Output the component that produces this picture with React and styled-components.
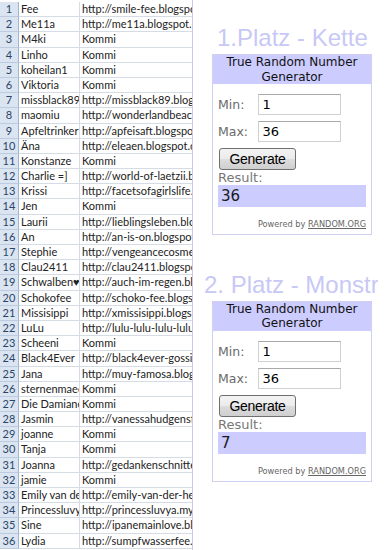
import React from "react";
import styled, { createGlobalStyle } from "styled-components";

const GlobalStyle = createGlobalStyle`
	html, body {
		margin: 0;
		padding: 0;
		background: #fff;
	}
	body {
		width: 388px;
		height: 550px;
		overflow: hidden;
	}
`;

const rows = [
	["Fee", "http://smile-fee.blogspot.com"],
	["Me11a", "http://me11a.blogspot.com"],
	["M4ki", "Kommi"],
	["Linho", "Kommi"],
	["koheilan1", "Kommi"],
	["Viktoria", "Kommi"],
	["missblack89", "http://missblack89.blogspot.com"],
	["maomiu", "http://wonderlandbeach.blogspot.com"],
	["Apfeltrinker", "http://apfeisaft.blogspot.com"],
	["Äna", "http://eleaen.blogspot.com"],
	["Konstanze", "Kommi"],
	["Charlie =]", "http://world-of-laetzii.blogspot.com"],
	["Krissi", "http://facetsofagirlslife.blogspot.com"],
	["Jen", "Kommi"],
	["Laurii", "http://lieblingsleben.blogspot.com"],
	["An", "http://an-is-on.blogspot.com"],
	["Stephie", "http://vengeancecosmetics.blogspot.com"],
	["Clau2411", "http://clau2411.blogspot.com"],
	["Schwalben♥", "http://auch-im-regen.blogspot.com"],
	["Schokofee", "http://schoko-fee.blogspot.com"],
	["Missisippi", "http://xmissisippi.blogspot.com"],
	["LuLu", "http://lulu-lulu-lulu-lulu.blogspot.com"],
	["Scheeni", "Kommi"],
	["Black4Ever", "http://black4ever-gossip.blogspot.com"],
	["Jana", "http://muy-famosa.blogspot.com"],
	["sternenmaedchen", "Kommi"],
	["Die Damianes", "Kommi"],
	["Jasmin", "http://vanessahudgensfan.blogspot.com"],
	["joanne", "Kommi"],
	["Tanja", "Kommi"],
	["Joanna", "http://gedankenschnitte.blogspot.com"],
	["jamie", "Kommi"],
	["Emily van der Heide", "http://emily-van-der-heide.blogspot.com"],
	["Princessluvya", "http://princessluvya.myblog.de"],
	["Sine", "http://ipanemainlove.blogspot.com"],
	["Lydia", "http://sumpfwasserfee.blogspot.com"],
];

const draws = [
	{ title: "1.Platz - Kette", indent: 13, gap: 0, result: "36" },
	{ title: "2. Platz - Monstrum", indent: 0, gap: 36, result: "7" },
];

const Page = styled.div`
	display: flex;
	width: 388px;
	height: 550px;
	overflow: hidden;
`;

const Sheet = styled.div`
	flex: none;
	width: 193px;
	box-sizing: border-box;
	padding-top: 2px;
	border-right: 1px solid #c9c9ef;
	display: grid;
	grid-template-columns: 19px 61px 112px;
	grid-auto-rows: 15.2px;
	font-family: Lato, "Liberation Sans", "DejaVu Sans", sans-serif;
	font-size: 11px;
	color: #222;
`;

const Cell = styled.div`
	box-sizing: border-box;
	overflow: hidden;
	white-space: nowrap;
	line-height: 14.2px;
	padding-left: ${(p) => (p.$head ? 0 : 2)}px;
	text-align: ${(p) => (p.$head ? "center" : "left")};
	background: ${(p) => (p.$head ? "#dbe5f1" : "#fff")};
	color: ${(p) => (p.$head ? "#2a4467" : "#222")};
	border-bottom: 1px solid ${(p) => (p.$head ? "#bccbe0" : "#d6dce6")};
	border-right: ${(p) =>
		p.$last ? "none" : `1px solid ${p.$head ? "#9fb6d2" : "#d6dce6"}`};
`;

/* the post column is cut at its right edge, a bit short of the window */
const Side = styled.div`
	flex: none;
	width: 185px;
	box-sizing: border-box;
	overflow: hidden;
	padding: 24px 0 0 11px;
`;

const Title = styled.div`
	margin-top: ${(p) => p.$gap}px;
	padding-left: ${(p) => p.$indent}px;
	font-family: "Liberation Sans", Arial, sans-serif;
	font-size: 24px;
	line-height: 28px;
	color: #c8c8f6;
	white-space: nowrap;
`;

const Widget = styled.div`
	width: 160px;
	margin: 2px 0 0 8px;
	box-sizing: border-box;
	border: 1px solid #cfcfee;
	font-family: "DejaVu Sans", Verdana, sans-serif;
`;

const Header = styled.div`
	background: #ccccff;
	text-align: center;
	font-size: 12px;
	line-height: 14.5px;
	color: #111;
`;

const Body = styled.div`
	padding: 10px 5px 4px;
`;

const Field = styled.div`
	display: flex;
	align-items: center;
	height: 21px;
	margin-bottom: 6px;
`;

const Label = styled.span`
	width: 39.5px;
	font-size: 12.5px;
	color: #6a6a6a;
`;

const NumberInput = styled.input`
	width: 83px;
	height: 21px;
	box-sizing: border-box;
	margin: 0;
	padding: 0 4px;
	border: 1px solid #d0d0d0;
	border-top-color: #a9a9a9;
	font-family: "DejaVu Sans", Verdana, sans-serif;
	font-size: 13px;
	color: #000;
	outline: none;
`;

const Generate = styled.button`
	display: block;
	width: 77px;
	height: 22px;
	margin: 0 0 0 1px;
	padding: 0;
	border: 1px solid #707070;
	border-radius: 3px;
	background: linear-gradient(#f3f3f3 0%, #ebebeb 50%, #dddddd 51%, #cfcfcf 100%);
	font-family: "Liberation Sans", Arial, sans-serif;
	font-size: 14px;
	letter-spacing: -0.3px;
	color: #000;
`;

const ResultLabel = styled.div`
	font-size: 13px;
	line-height: 15.3px;
	color: #777;
`;

const ResultValue = styled.div`
	height: 22px;
	line-height: 22px;
	padding-left: 3px;
	background: #ccccff;
	font-size: 15px;
	color: #1a1a1a;
`;

const Powered = styled.div`
	margin-top: 10.5px;
	text-align: right;
	font-size: 8.2px;
	line-height: 12px;
	color: #666;

	span {
		text-decoration: underline;
	}
`;

const RandomWidget = ({ result }) => (
	<Widget>
		<Header>
			True Random Number
			<br />
			Generator
		</Header>
		<Body>
			<Field>
				<Label>Min:</Label>
				<NumberInput readOnly value="1" />
			</Field>
			<Field>
				<Label>Max:</Label>
				<NumberInput readOnly value="36" />
			</Field>
			<Generate type="button">Generate</Generate>
			<ResultLabel>Result:</ResultLabel>
			<ResultValue>{result}</ResultValue>
			<Powered>
				Powered by <span>RANDOM.ORG</span>
			</Powered>
		</Body>
	</Widget>
);

const App = () => (
	<>
		<GlobalStyle />
		<Page>
			<Sheet>
				{rows.map(([name, link], i) => (
					<React.Fragment key={i}>
						<Cell $head>{i + 1}</Cell>
						<Cell>{name}</Cell>
						<Cell $last>{link}</Cell>
					</React.Fragment>
				))}
			</Sheet>
			<Side>
				{draws.map((d) => (
					<React.Fragment key={d.title}>
						<Title $indent={d.indent} $gap={d.gap}>
							{d.title}
						</Title>
						<RandomWidget result={d.result} />
					</React.Fragment>
				))}
			</Side>
		</Page>
	</>
);

export default App;
